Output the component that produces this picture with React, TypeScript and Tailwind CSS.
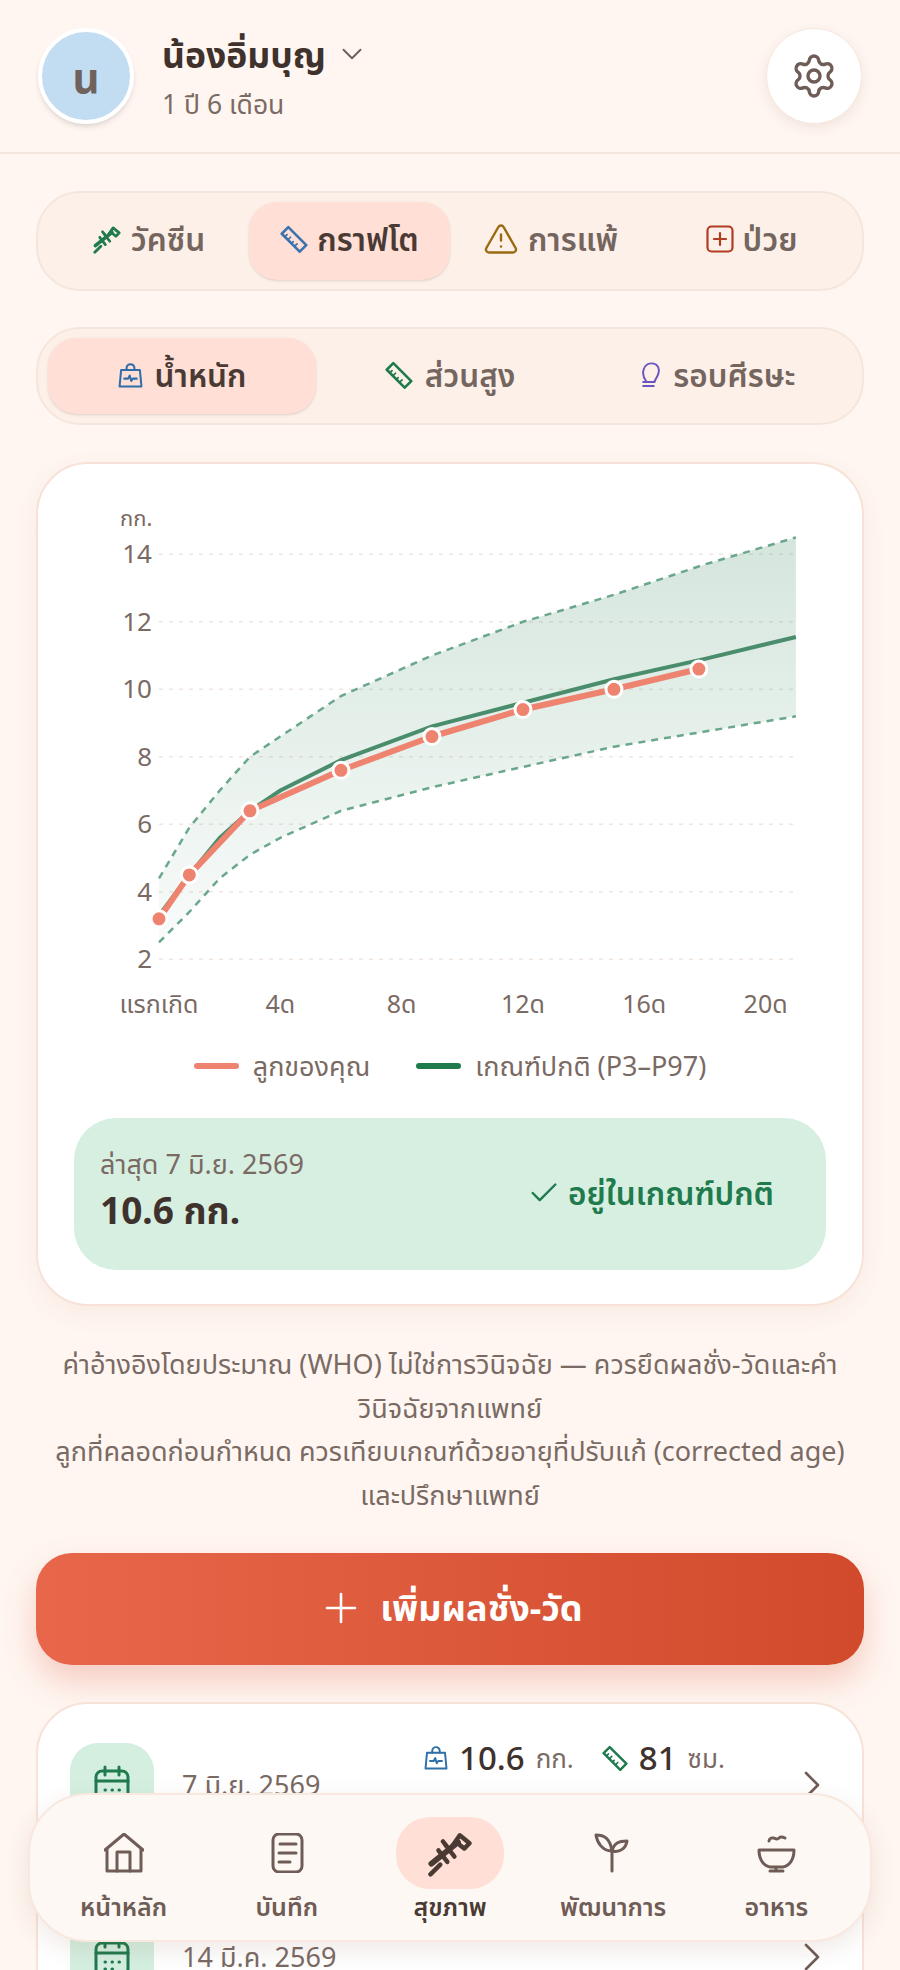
import React from 'react';
import { ChevronDown, ChevronRight, Settings, Plus, Check, TriangleAlert } from 'lucide-react';

type IconProps = { className?: string };

const FONT = "font-['Noto_Sans','Noto_Sans_Thai',sans-serif]";

const SyringeIcon = ({ className }: IconProps) => (
  <svg viewBox="14 14 54 54" fill="none" stroke="currentColor" strokeWidth="5" strokeLinecap="round" strokeLinejoin="round" className={className}>
    <path d="M20 53L50 29" strokeWidth="6.5" />
    <path d="M19 65l11-11" />
    <path d="M28 38l10 13M36 32l10 13" />
    <path d="M33 28l4 5" />
    <path d="M43 34l9-13 11 9-6 6-5-4" />
  </svg>
);

const RulerIcon = ({ className }: IconProps) => (
  <svg viewBox="0 0 32 32" fill="none" stroke="currentColor" strokeWidth="3" strokeLinejoin="round" className={className}>
    <path d="M2 10L9.5 2.5 30 23l-7.5 7.5z" />
    <path d="M9 17l3-3M13 21l2-2M16.5 24.5l3-3M6 13l2-2" strokeLinecap="round" strokeWidth="2" />
  </svg>
);

const ScaleBagIcon = ({ className }: IconProps) => (
  <svg viewBox="0 0 32 32" fill="none" stroke="currentColor" strokeWidth="2.6" strokeLinecap="round" strokeLinejoin="round" className={className}>
    <path d="M4 9h24l2 21H2z" />
    <path d="M11 9V6.5a5 5 0 0 1 10 0V9" />
    <path d="M8 20h5l2-4 2 7 2-3h5" />
  </svg>
);

const HeadIcon = ({ className }: IconProps) => (
  <svg viewBox="0 0 24 32" fill="none" stroke="currentColor" strokeWidth="2.4" strokeLinecap="round" strokeLinejoin="round" className={className}>
    <path d="M7 24C3 19 2 13 4 8c2-5 7-7 12-6 5 1 7 6 6 11-1 5-4 8-5 11" />
    <path d="M3 24.5h14M3 29.5h13" />
  </svg>
);

const HomeIcon = ({ className }: IconProps) => (
  <svg viewBox="0 0 40 40" fill="none" stroke="currentColor" strokeWidth="3" strokeLinecap="round" strokeLinejoin="round" className={className}>
    <path d="M1 17L20 1l19 16" />
    <path d="M3 16v22h34V16" />
    <path d="M13 38V19h13v19" />
  </svg>
);

const NoteIcon = ({ className }: IconProps) => (
  <svg viewBox="0 0 40 40" fill="none" stroke="currentColor" strokeWidth="3" strokeLinecap="round" strokeLinejoin="round" className={className}>
    <rect x="6" y="1" width="29" height="38" rx="6" />
    <path d="M13 11h16M12 20h17M12 29h11" />
  </svg>
);

const SproutIcon = ({ className }: IconProps) => (
  <svg viewBox="0 0 40 40" fill="none" stroke="currentColor" strokeWidth="3" strokeLinecap="round" strokeLinejoin="round" className={className}>
    <path d="M19 38V18" />
    <path d="M19 18C9 18 4 9 3 2c8 0 14 3 16 16z" />
    <path d="M19 18c8 2 14-3 15-10-8 0-13 2-15 10z" />
  </svg>
);

const BowlIcon = ({ className }: IconProps) => (
  <svg viewBox="0 0 40 40" fill="none" stroke="currentColor" strokeWidth="3" strokeLinecap="round" strokeLinejoin="round" className={className}>
    <path d="M13 8c1-4 3-3 5-3 2 1 3 2 5 0 2-2 4-1 6 0" />
    <path d="M3 17h35c0 10-5 16-11 17H14C8 33 3 27 3 17z" />
    <path d="M14 38h13M20 35v3" />
  </svg>
);

const CalendarIcon = ({ className }: IconProps) => (
  <svg viewBox="0 0 36 40" fill="none" stroke="currentColor" strokeWidth="3" strokeLinecap="round" strokeLinejoin="round" className={className}>
    <rect x="2" y="6" width="32" height="32" rx="6" />
    <path d="M2 16h32M11 2v8M25 2v8" />
    <path d="M11 25h.5M18 25h.5M25 25h.5M11 32h.5M18 32h.5" />
  </svg>
);

const PlusBoxIcon = ({ className }: IconProps) => (
  <svg viewBox="0 0 28 28" fill="none" stroke="currentColor" strokeWidth="2.2" strokeLinecap="round" strokeLinejoin="round" className={className}>
    <rect x="1.5" y="1.5" width="25" height="25" rx="4" />
    <path d="M14 8v12M8 14h12" />
  </svg>
);

const mainTabs = [
  { label: 'วัคซีน', icon: <SyringeIcon className="w-[30px] h-[30px] text-[#1f7a4d]" /> },
  { label: 'กราฟโต', icon: <RulerIcon className="w-[28px] h-[28px] text-[#3b73ad]" />, active: true },
  { label: 'การแพ้', icon: <TriangleAlert className="w-[36px] h-[36px] text-[#9a6a10]" strokeWidth={1.6} /> },
  { label: 'ป่วย', icon: <PlusBoxIcon className="w-[28px] h-[28px] text-[#b23c22]" /> },
];

const subTabs = [
  { label: 'น้ำหนัก', icon: <ScaleBagIcon className="w-[25px] h-[25px] text-[#2f6ea8]" />, active: true },
  { label: 'ส่วนสูง', icon: <RulerIcon className="w-[28px] h-[28px] text-[#1f7a4d]" /> },
  { label: 'รอบศีรษะ', icon: <HeadIcon className="w-[21px] h-[26px] text-[#6a55c0]" /> },
];

const navItems = [
  { label: 'หน้าหลัก', icon: <HomeIcon className="w-[40px] h-[40px]" /> },
  { label: 'บันทึก', icon: <NoteIcon className="w-[40px] h-[40px]" /> },
  { label: 'สุขภาพ', icon: <SyringeIcon className="w-[48px] h-[48px]" />, active: true },
  { label: 'พัฒนาการ', icon: <SproutIcon className="w-[40px] h-[40px]" /> },
  { label: 'อาหาร', icon: <BowlIcon className="w-[40px] h-[40px]" /> },
];

// chart scale: months -> px, kg -> px
const X = (m: number) => 158 + m * 30.33;
const Y = (kg: number) => 959.3 - (kg - 2) * 33.75 - 480;

const toPoints = (d: number[][]) => d.map(([m, kg]) => `${X(m).toFixed(1)},${Y(kg).toFixed(1)}`).join(' ');

const p97 = [[0, 4.4], [1, 5.9], [2, 7], [3, 8], [4, 8.6], [6, 9.8], [9, 11], [12, 12], [15, 12.8], [18, 13.7], [21, 14.5]];
const p50 = [[0, 3.3], [1, 4.5], [2, 5.6], [3, 6.4], [4, 7], [6, 7.9], [9, 8.9], [12, 9.6], [15, 10.3], [18, 10.9], [21, 11.55]];
const p3 = [[0, 2.5], [1, 3.4], [2, 4.4], [3, 5.1], [4, 5.6], [6, 6.4], [9, 7.1], [12, 7.7], [15, 8.3], [18, 8.75], [21, 9.2]];
const child = [[0, 3.2], [1, 4.5], [3, 6.4], [6, 7.6], [9, 8.6], [12, 9.4], [15, 10], [17.8, 10.6]];

const GrowthChart = () => (
  <svg viewBox="0 0 860 550" className="absolute left-[-37px] top-[16px] w-[860px] h-[550px]">
    <defs>
      <linearGradient id="band" x1="0" y1="0" x2="0" y2="1">
        <stop offset="0" stopColor="#1f7a4d" stopOpacity="0.19" />
        <stop offset="1" stopColor="#1f7a4d" stopOpacity="0.03" />
      </linearGradient>
    </defs>
    <text x="119" y="46" fontSize="22" fill="#7a6a64">กก.</text>
    {[14, 12, 10, 8, 6, 4, 2].map((kg) => (
      <g key={kg}>
        <line x1="158" x2="795" y1={Y(kg)} y2={Y(kg)} stroke="#f0e6e0" strokeWidth="1.5" strokeDasharray="4 6" />
        <text x="151" y={Y(kg) + 9} fontSize="26" textAnchor="end" fill="#7a6a64">{kg}</text>
      </g>
    ))}
    <polygon points={`${toPoints(p97)} ${toPoints([...p3].reverse())}`} fill="url(#band)" />
    <polyline points={toPoints(p97)} fill="none" stroke="#6aa78b" strokeWidth="2.5" strokeDasharray="7 6" />
    <polyline points={toPoints(p3)} fill="none" stroke="#6aa78b" strokeWidth="2.5" strokeDasharray="7 6" />
    <polyline points={toPoints(p50)} fill="none" stroke="#4a8d6c" strokeWidth="4" />
    <polyline points={toPoints(child)} fill="none" stroke="#ee8370" strokeWidth="6" strokeLinejoin="round" />
    {child.map(([m, kg]) => (
      <circle key={m} cx={X(m)} cy={Y(kg)} r="8" fill="#ee8370" stroke="#fff" strokeWidth="3" />
    ))}
    {[['แรกเกิด', 0], ['4ด', 4], ['8ด', 8], ['12ด', 12], ['16ด', 16], ['20ด', 20]].map(([t, m]) => (
      <text key={t} x={X(m as number)} y="533" fontSize="25" textAnchor="middle" fill="#7a6a64">{t}</text>
    ))}
  </svg>
);

export default function App() {
  return (
    <div className={`${FONT} relative h-[1970px] w-[900px] overflow-hidden bg-[#fff6f1] text-[#3f322d]`}>
      {/* Header */}
      <header className="flex h-[154px] items-center justify-between border-b-2 border-[#f3e6df] pl-[38px] pr-[38px]">
        <div className="flex items-center gap-[28px]">
          <div className="flex h-[96px] w-[96px] items-center justify-center rounded-full border-4 border-white bg-[#c2dcf2] text-[42px] font-bold text-[#6f625d] shadow-md">
            น
          </div>
          <div>
            <div className="flex items-center gap-[9px]">
              <span className="text-[35.5px] font-bold leading-[44px]">น้องอิ่มบุญ</span>
              <ChevronDown className="h-[34px] w-[34px] text-[#6f625d]" strokeWidth={1.4} />
            </div>
            <div className="mt-[11px] text-[26.5px] leading-[34px] text-[#7a6a64]">1 ปี 6 เดือน</div>
          </div>
        </div>
        <button className="flex h-[96px] w-[96px] items-center justify-center rounded-full border border-[#f6e8e0] bg-white shadow-[0_4px_12px_rgba(120,70,50,0.1)]">
          <Settings className="h-[48px] w-[48px] text-[#6f5c57]" strokeWidth={1.7} />
        </button>
      </header>

      <main className="px-[36px]">
        {/* Main tabs */}
        <div className="mt-[37px] grid h-[100px] grid-cols-4 rounded-[44px] border-2 border-[#f5e6dd] bg-[#fdf0e9] px-[10px] py-[9px]">
          {mainTabs.map((t) => (
            <div
              key={t.label}
              className={`flex items-center justify-center gap-[9px] rounded-[28px] pb-[5px] text-[31.5px] font-semibold ${t.active ? 'bg-[#ffdfd6] text-[#4a3a34] shadow-sm' : 'text-[#75655f]'}`}
            >
              {t.icon}
              <span>{t.label}</span>
            </div>
          ))}
        </div>

        {/* Sub tabs */}
        <div className="mt-[36px] grid h-[98px] grid-cols-3 rounded-[44px] border-2 border-[#f5e6dd] bg-[#fdf0e9] px-[10px] py-[9px]">
          {subTabs.map((t) => (
            <div
              key={t.label}
              className={`flex items-center justify-center gap-[12px] rounded-[28px] pb-[2px] text-[31.5px] font-semibold ${t.active ? 'bg-[#ffdfd6] text-[#4a3a34] shadow-sm' : 'text-[#75655f]'}`}
            >
              {t.icon}
              <span>{t.label}</span>
            </div>
          ))}
        </div>

        {/* Chart card */}
        <section className="relative mt-[37px] h-[844px] rounded-[52px] border-2 border-[#f8e2d8] bg-white shadow-[0_8px_24px_rgba(160,90,60,0.07)]">
          <GrowthChart />
          <div className="absolute inset-x-0 top-[582px] flex items-center justify-center gap-[46px] text-[27px] text-[#7a6a64]">
            <span className="flex items-center gap-[14px]">
              <i className="h-[6px] w-[45px] rounded-full bg-[#ee8370]" />
              ลูกของคุณ
            </span>
            <span className="flex items-center gap-[14px]">
              <i className="h-[6px] w-[45px] rounded-full bg-[#1f7a4d]" />
              เกณฑ์ปกติ (P3–P97)
            </span>
          </div>
          <div className="absolute inset-x-[36px] top-[654px] flex h-[152px] items-center justify-between rounded-[42px] bg-[#d7efe1] pl-[26px] pr-[52px]">
            <div className="pb-[8px]">
              <div className="text-[27px] leading-[36px] text-[#7a6a64]">ล่าสุด 7 มิ.ย. 2569</div>
              <div className="mt-[4px] text-[37px] font-bold leading-[48px]">10.6 กก.</div>
            </div>
            <div className="flex items-center gap-[7px] pb-[3px] text-[31.5px] font-semibold text-[#1f7a4d]">
              <Check className="h-[34px] w-[34px]" strokeWidth={1.7} />
              อยู่ในเกณฑ์ปกติ
            </div>
          </div>
        </section>

        {/* Note */}
        <p className="mt-[36px] text-center text-[27px] leading-[43.5px] text-[#7a6a64]">
          ค่าอ้างอิงโดยประมาณ (WHO) ไม่ใช่การวินิจฉัย — ควรยึดผลชั่ง-วัดและคำ
          <br />
          วินิจฉัยจากแพทย์
          <br />
          ลูกที่คลอดก่อนกำหนด ควรเทียบเกณฑ์ด้วยอายุที่ปรับแก้ (corrected age)
          <br />
          และปรึกษาแพทย์
        </p>

        {/* Add button */}
        <button className="mt-[37px] flex h-[112px] w-full items-center justify-center gap-[15px] rounded-[36px] bg-gradient-to-r from-[#e8674a] to-[#d14a2b] pb-[2px] text-[36px] font-bold text-white shadow-[0_16px_32px_rgba(214,80,50,0.25)]">
          <Plus className="h-[48px] w-[48px]" strokeWidth={1.3} />
          เพิ่มผลชั่ง-วัด
        </button>

        {/* History list */}
        <section className="mt-[37px] rounded-[52px] border-2 border-[#f8e2d8] bg-white px-[32px] pt-[39px]">
          <div className="flex h-[172px] items-start">
            <div className="flex h-[84px] w-[84px] shrink-0 items-center justify-center rounded-[28px] bg-[#d4efe0]">
              <CalendarIcon className="h-[40px] w-[36px] text-[#1f7a4d]" />
            </div>
            <div className="ml-[28px] mt-[24px] text-[27px] leading-[36px] text-[#7a6a64]">7 มิ.ย. 2569</div>
            <div className="ml-auto mr-[63px] mt-[-7px] flex items-center gap-[28px]">
              <span className="flex items-center gap-[11px] text-[33px] font-medium leading-[44px]">
                <ScaleBagIcon className="h-[24px] w-[24px] text-[#2f6ea8]" />
                10.6 <small className="text-[26px] font-normal text-[#7a6a64]">กก.</small>
              </span>
              <span className="flex items-center gap-[11px] text-[33px] font-medium leading-[44px]">
                <RulerIcon className="h-[26px] w-[26px] text-[#1f7a4d]" />
                81 <small className="text-[26px] font-normal text-[#7a6a64]">ซม.</small>
              </span>
            </div>
            <ChevronRight className="-mr-[6px] mt-[18px] h-[48px] w-[48px] shrink-0 text-[#6f5c57]" strokeWidth={1.3} />
          </div>
          <div className="flex h-[172px] items-start">
            <div className="flex h-[84px] w-[84px] shrink-0 items-center justify-center rounded-[28px] bg-[#d4efe0]">
              <CalendarIcon className="h-[40px] w-[36px] text-[#1f7a4d]" />
            </div>
            <div className="ml-[28px] mt-[24px] text-[27px] leading-[36px] text-[#7a6a64]">14 มี.ค. 2569</div>
            <ChevronRight className="-mr-[6px] ml-auto mt-[18px] h-[48px] w-[48px] shrink-0 text-[#6f5c57]" strokeWidth={1.3} />
          </div>
        </section>
      </main>

      {/* Bottom nav */}
      <nav className="absolute bottom-[28px] left-[28px] right-[28px] grid h-[149px] grid-cols-5 rounded-[60px] border-2 border-[#f8e8df] bg-[#fdf8f3] px-[12px] shadow-[0_8px_24px_rgba(120,70,50,0.12)]">
        {navItems.map((n) => (
          <div key={n.label} className="flex flex-col items-center pt-[22px]">
            <div className={`flex h-[72px] w-[108px] items-center justify-center rounded-[34px] ${n.active ? 'bg-[#ffdfd6] text-[#4a3a34]' : 'text-[#6f5c57]'}`}>
              {n.icon}
            </div>
            <span className={`whitespace-nowrap text-[25px] font-semibold leading-[34px] ${n.active ? 'text-[#4a3a34]' : 'text-[#6f5c57]'}`}>{n.label}</span>
          </div>
        ))}
      </nav>
    </div>
  );
}
